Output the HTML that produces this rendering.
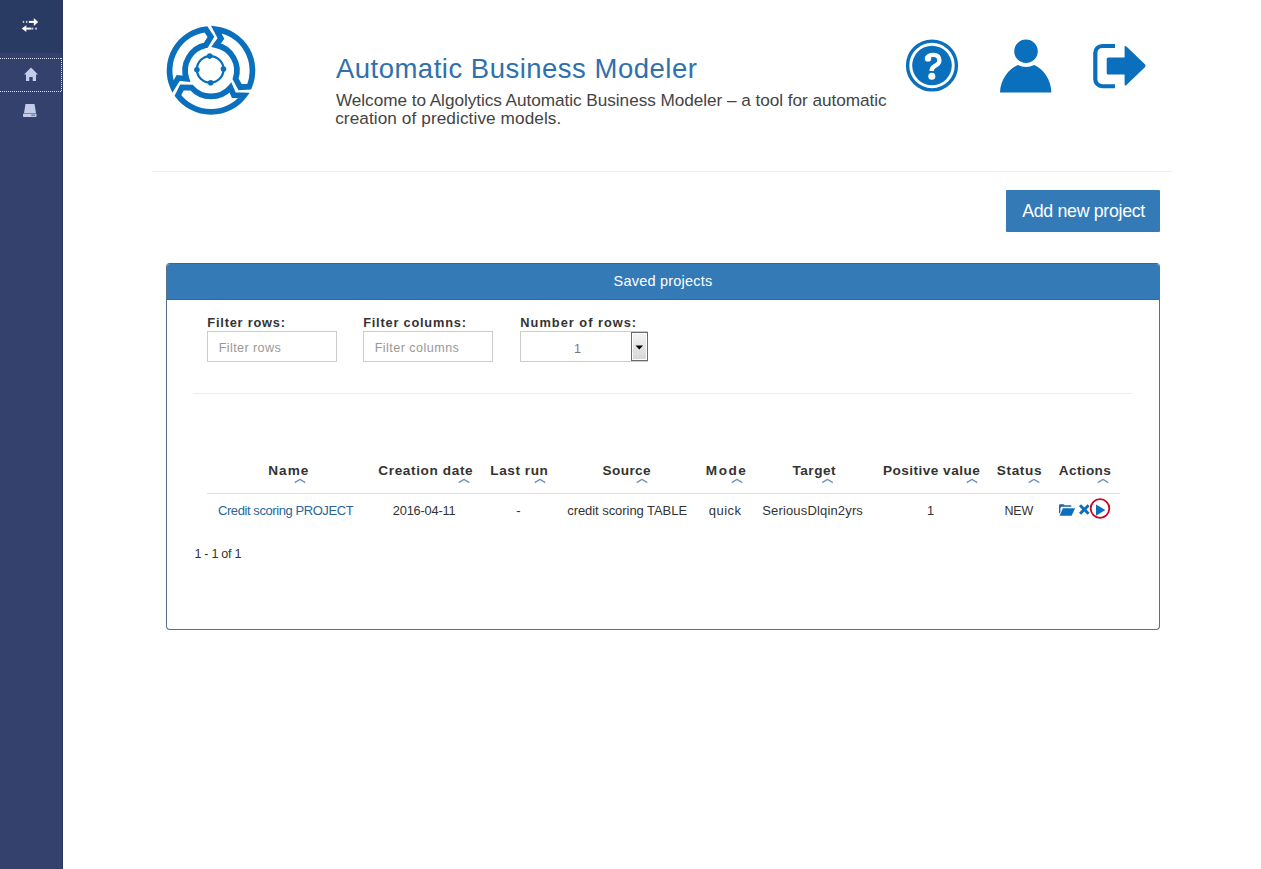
<!DOCTYPE html>
<html><head><meta charset="utf-8">
<style>
html,body{margin:0;padding:0;}
body{width:1261px;height:869px;position:relative;overflow:hidden;background:#fff;font-family:"Liberation Sans",sans-serif;color:#333;}
.t{position:absolute;white-space:nowrap;line-height:1;}
#sb{position:absolute;left:0;top:0;width:62px;height:869px;background:#33416c;border-right:1px solid #2c3760;}
#sbtop{position:absolute;left:0;top:0;width:62px;height:53px;background:#293b63;}
.fd{position:absolute;}
#fd1{left:0;top:58px;width:62px;height:1px;background:repeating-linear-gradient(90deg,#d3daf2 0 1px,transparent 1px 2px);}
#fd2{left:0;top:91px;width:62px;height:1px;background:repeating-linear-gradient(90deg,#d3daf2 0 1px,transparent 1px 2px);}
#fd3{left:61px;top:58px;width:1px;height:34px;background:repeating-linear-gradient(180deg,#d3daf2 0 1px,transparent 1px 2px);}
#hr1{position:absolute;left:152px;top:171px;width:1020px;height:1px;background:#eee;}
#btn{position:absolute;left:1006px;top:190px;width:154px;height:42px;background:#337ab7;border-radius:1px;}
#panel{position:absolute;left:166px;top:263px;width:992px;height:365px;border:1px solid #59708a;border-top-color:#3a6690;border-radius:4px;overflow:hidden;}
#phead{position:absolute;left:0;top:0;width:992px;height:35px;background:#337ab7;border-bottom:1px solid #2e6da4;}
.inp{position:absolute;height:29px;border:1px solid #ccc;background:#fff;}
#hr2{position:absolute;left:193px;top:393px;width:939px;height:1px;background:#eee;}
#thline{position:absolute;left:207px;top:493px;width:913px;height:1px;background:#ddd;}
.caret{position:absolute;width:12px;height:5px;}
</style></head><body>
<div id="sb"></div>
<div id="sbtop"></div>
<div class="fd" id="fd1"></div><div class="fd" id="fd2"></div><div class="fd" id="fd3"></div>
<!-- sidebar icons -->
<svg style="position:absolute;left:0;top:0" width="63" height="130" viewBox="0 0 63 130">
  <!-- arrows -->
  <g fill="#fff">
    <rect x="22.8" y="20.9" width="1.4" height="2" fill="#c9d3ee"/>
    <rect x="25.9" y="20.9" width="1.4" height="2" fill="#c9d3ee"/>
    <rect x="28.8" y="20.9" width="5.5" height="2"/>
    <path d="M33.8,17.9 L38.2,21.9 L33.8,25.9 Z"/>
    <path d="M26.3,25.2 L21.7,28.6 L26.3,32 Z"/>
    <rect x="26" y="27.6" width="5.4" height="2"/>
    <rect x="31.6" y="27.6" width="1.7" height="2" fill="#c9d3ee"/>
    <rect x="35.2" y="27.6" width="1.7" height="2" fill="#c9d3ee"/>
  </g>
  <!-- home -->
  <path fill="#c3cdea" d="M31,67.5 L24,74.5 L26,74.5 L26,81 L29.3,81 L29.3,77 L32.7,77 L32.7,81 L36,81 L36,74.5 L38,74.5 Z"/>
  <!-- drive -->
  <path fill="#c3cdea" d="M25.5,104 L34.5,104 L36,113 L24,113 Z"/>
  <rect fill="#c3cdea" x="23" y="113.5" width="13.5" height="3.5" rx="1"/>
  <rect fill="#33416c" x="31.5" y="114.6" width="1.2" height="1.2"/>
  <rect fill="#33416c" x="33.5" y="114.6" width="1.2" height="1.2"/>
</svg>

<!-- logo -->
<svg id="logo" style="position:absolute;left:160px;top:20px" width="102" height="102" viewBox="-51 -50.5 102 102"><g fill="none" stroke="#0a6fbc" stroke-width="5.7" stroke-linejoin="miter"><path d="M5.09,-41.14 A41.45,41.45 0 0 1 38.17,16.16 L29.15,16.71 L24.53,8.31 A25.90,25.90 0 0 0 5.07,-25.40 L9.95,-32.09 Z M33.08,24.97 A41.45,41.45 0 0 1 -33.08,24.97 L-29.05,16.89 L-19.46,17.09 A25.90,25.90 0 0 0 19.46,17.09 L22.82,24.66 Z M-38.17,16.16 A41.45,41.45 0 0 1 -5.09,-41.14 L-0.10,-33.60 L-5.07,-25.40 A25.90,25.90 0 0 0 -24.53,8.31 L-32.77,7.43 Z"/></g><circle cx="-0.8" cy="-1.1" r="13.3" fill="none" stroke="#0a6fbc" stroke-width="2.3"/><circle cx="-1.26" cy="-14.39" r="2.8" fill="#0a6fbc"/><circle cx="12.49" cy="-1.56" r="2.8" fill="#0a6fbc"/><circle cx="-0.34" cy="12.19" r="2.8" fill="#0a6fbc"/><circle cx="-14.09" cy="-0.64" r="2.8" fill="#0a6fbc"/></svg>

<div class="t" id="title" style="left:335.90px;top:55.00px;font-size:27.50px;color:#3070ad;letter-spacing:0.499px;">Automatic Business Modeler</div>
<div class="t" id="sub1" style="left:335.94px;top:91.90px;font-size:17.20px;color:#444;letter-spacing:-0.045px;">Welcome to Algolytics Automatic Business Modeler – a tool for automatic</div>
<div class="t" id="sub2" style="left:335.15px;top:109.90px;font-size:17.20px;color:#444;letter-spacing:0.090px;">creation of predictive models.</div>

<!-- header icons -->
<svg style="position:absolute;left:890px;top:30px" width="280" height="70" viewBox="890 30 280 70">
  <circle cx="932" cy="65.5" r="24.4" fill="none" stroke="#0a6fbc" stroke-width="3.4"/>
  <circle cx="932" cy="65.5" r="19.8" fill="#0a6fbc"/>
  <g fill="#fff"><circle cx="928" cy="58.4" r="3.2"/><circle cx="931.8" cy="76.2" r="3.5"/></g>
  <path d="M927.6,57.5 Q928.5,54.8 933.4,54.8 Q939.4,54.8 939.4,60.6 Q939.4,64 934.5,66.2 Q931.6,67.6 931.6,71" fill="none" stroke="#fff" stroke-width="4.3"/>
  <circle cx="1026" cy="51.2" r="11.75" fill="#0a6fbc"/>
  <path fill="#0a6fbc" d="M1000,92.4 C1000.3,79.5 1009,68.5 1017.8,65 Q1026,68.8 1034.2,65 C1043,68.5 1051.2,79.5 1051.4,92.4 Z"/>
  <path fill="#0a6fbc" d="M1115,43.9 L1102.2,43.9 A9,9 0 0 0 1093.2,52.9 L1093.2,79.2 A9,9 0 0 0 1102.2,88.2 L1115,88.2 L1115,84.2 L1102.2,84.2 A4.8,4.8 0 0 1 1097.4,79.4 L1097.4,52.7 A4.8,4.8 0 0 1 1102.2,47.9 L1115,47.9 Z"/>
  <path fill="#0a6fbc" d="M1108.2,57.4 L1124.6,57.4 L1124.6,47.5 Q1124.6,45.2 1126.4,46.6 L1144.9,64.3 Q1146.4,65.8 1144.9,67.3 L1126.4,85 Q1124.6,86.5 1124.6,84.2 L1124.6,74.4 L1108.2,74.4 Q1106.7,74.4 1106.7,72.9 L1106.7,58.9 Q1106.7,57.4 1108.2,57.4 Z"/>
</svg>

<div id="hr1"></div>
<div id="btn"></div>
<div class="t" id="btntxt" style="left:1022.28px;top:203.01px;font-size:17.80px;color:#fff;letter-spacing:-0.326px;">Add new project</div>

<div id="panel"><div id="phead"></div></div>
<div class="t" id="ptitle" style="left:613.55px;top:273.71px;font-size:14.50px;color:#fff;letter-spacing:0.210px;">Saved projects</div>

<div class="t" id="l1" style="left:207.37px;top:317.11px;font-size:12.80px;font-weight:bold;color:#333;letter-spacing:0.785px;">Filter rows:</div>
<div class="t" id="l2" style="left:363.17px;top:317.11px;font-size:12.80px;font-weight:bold;color:#333;letter-spacing:0.788px;">Filter columns:</div>
<div class="t" id="l3" style="left:520.35px;top:317.11px;font-size:12.80px;font-weight:bold;color:#333;letter-spacing:1.008px;">Number of rows:</div>
<div class="inp" style="left:207px;top:331px;width:128px;"></div>
<div class="inp" style="left:363px;top:331px;width:128px;"></div>
<div class="inp" style="left:520px;top:331px;width:126px;"></div>
<div class="t" id="ph1" style="left:218.72px;top:341.81px;font-size:12.60px;color:#999;letter-spacing:0.396px;">Filter rows</div>
<div class="t" id="ph2" style="left:374.72px;top:341.81px;font-size:12.60px;color:#999;letter-spacing:0.446px;">Filter columns</div>
<div class="t" id="num" style="left:573.89px;top:343.00px;font-size:12.60px;color:#777;">1</div>
<div id="selbtn" style="position:absolute;left:631px;top:332px;width:15px;height:27px;border:1px solid #6a6a6a;box-shadow:inset 0 0 0 1px #fff;background:linear-gradient(#f4f4f4,#d6d6d6);"></div>
<svg style="position:absolute;left:635px;top:345px" width="9" height="5"><path d="M0.5,0.5 L8,0.5 L4.25,4.5 Z" fill="#000"/></svg>

<div id="hr2"></div>

<div class="t th" id="h1" style="left:268.21px;top:464.01px;font-size:13.60px;font-weight:bold;color:#333;letter-spacing:1.041px;">Name</div>
<div class="t th" id="h2" style="left:378.36px;top:464.01px;font-size:13.60px;font-weight:bold;color:#333;letter-spacing:0.616px;">Creation date</div>
<div class="t th" id="h3" style="left:490.28px;top:464.01px;font-size:13.60px;font-weight:bold;color:#333;letter-spacing:0.574px;">Last run</div>
<div class="t th" id="h4" style="left:602.51px;top:464.01px;font-size:13.60px;font-weight:bold;color:#333;letter-spacing:0.401px;">Source</div>
<div class="t th" id="h5" style="left:705.81px;top:464.01px;font-size:13.60px;font-weight:bold;color:#333;letter-spacing:1.524px;">Mode</div>
<div class="t th" id="h6" style="left:792.40px;top:464.01px;font-size:13.60px;font-weight:bold;color:#333;letter-spacing:0.544px;">Target</div>
<div class="t th" id="h7" style="left:882.97px;top:464.01px;font-size:13.60px;font-weight:bold;color:#333;letter-spacing:0.471px;">Positive value</div>
<div class="t th" id="h8" style="left:996.79px;top:464.01px;font-size:13.60px;font-weight:bold;color:#333;letter-spacing:0.627px;">Status</div>
<div class="t th" id="h9" style="left:1058.86px;top:464.01px;font-size:13.60px;font-weight:bold;color:#333;letter-spacing:0.337px;">Actions</div>

<svg style="position:absolute;left:0;top:476px" width="1261" height="10" viewBox="0 476 1261 10">
  <g fill="none" stroke="#6e93bb" stroke-width="1.25" stroke-linejoin="round">
    <path d="M294.7,482.6 L300.0,479.4 L305.3,482.6"/>
    <path d="M458.7,482.6 L464.0,479.4 L469.3,482.6"/>
    <path d="M534.7,482.6 L540.0,479.4 L545.3,482.6"/>
    <path d="M636.7,482.6 L642.0,479.4 L647.3,482.6"/>
    <path d="M731.7,482.6 L737.0,479.4 L742.3,482.6"/>
    <path d="M822.2,482.6 L827.5,479.4 L832.8,482.6"/>
    <path d="M966.7,482.6 L972.0,479.4 L977.3,482.6"/>
    <path d="M1028.7,482.6 L1034.0,479.4 L1039.3,482.6"/>
    <path d="M1097.7,482.6 L1103.0,479.4 L1108.3,482.6"/>
  </g>
</svg>

<div id="thline"></div>

<div class="t" id="d1" style="left:217.99px;top:504.00px;font-size:13.00px;color:#2c6499;letter-spacing:-0.422px;">Credit scoring PROJECT</div>
<div class="t" id="d2" style="left:392.85px;top:505.00px;font-size:12.80px;color:#333;letter-spacing:-0.200px;">2016-04-11</div>
<div class="t" id="d3" style="left:516.17px;top:504.00px;font-size:13.00px;color:#333;">-</div>
<div class="t" id="d4" style="left:567.23px;top:504.00px;font-size:13.00px;color:#333;letter-spacing:-0.055px;">credit scoring TABLE</div>
<div class="t" id="d5" style="left:708.79px;top:504.00px;font-size:13.00px;color:#333;letter-spacing:0.477px;">quick</div>
<div class="t" id="d6" style="left:762.23px;top:504.00px;font-size:13.00px;color:#333;letter-spacing:0.159px;">SeriousDlqin2yrs</div>
<div class="t" id="d7" style="left:926.95px;top:505.00px;font-size:12.80px;color:#333;">1</div>
<div class="t" id="d8" style="left:1004.51px;top:504.80px;font-size:12.50px;color:#333;letter-spacing:-0.177px;">NEW</div>

<!-- action icons -->
<svg style="position:absolute;left:1050px;top:495px" width="70" height="30" viewBox="1050 495 70 30">
  <path fill="#1f64a3" d="M1059,514 L1059,505.4 Q1059,504.3 1060.1,504.3 L1063.6,504.3 L1064.8,505.3 L1071.3,505.3 L1071.3,506.8 L1061.2,506.8 L1060.4,508 L1060.4,512 Z"/><path fill="#0a6fbc" d="M1059.6,515.8 L1062.9,508.3 L1075.1,508.3 L1071.6,515.8 Z"/>
  <path fill="#0a6fbc" d="M1079,506.3 L1081.1,504.2 L1084.3,507.4 L1087.5,504.2 L1089.6,506.3 L1086.4,509.5 L1089.6,512.7 L1087.5,514.8 L1084.3,511.6 L1081.1,514.8 L1079,512.7 L1082.2,509.5 Z"/>
  <circle cx="1100" cy="508.5" r="9.3" fill="none" stroke="#d5001c" stroke-width="1.8"/>
  <path fill="#0a6fbc" d="M1096,504.4 L1105.3,510 L1096,515.8 Z"/>
</svg>

<div class="t" id="pg" style="left:194.41px;top:547.80px;font-size:12.60px;color:#333;letter-spacing:-0.296px;">1 - 1 of 1</div>
</body></html>
